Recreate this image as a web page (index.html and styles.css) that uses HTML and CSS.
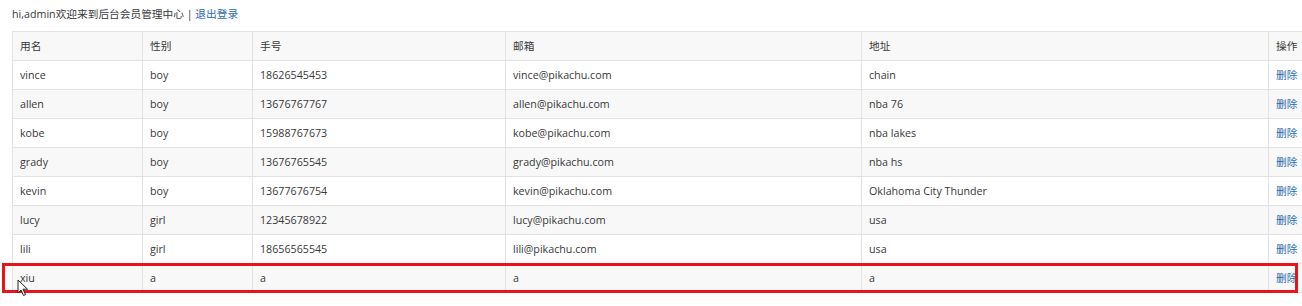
FILE: index.html
```html
<!DOCTYPE html>
<html lang="zh">
<head>
<meta charset="utf-8">
<link rel="stylesheet" href="styles.css">
</head>
<body>
<div class="page">
  <p class="welcome">hi,admin欢迎来到后台会员管理中心 | <a href="#">退出登录</a></p>
  <table class="users">
    <colgroup>
      <col style="width:130px"><col style="width:110px"><col style="width:253px"><col style="width:356px"><col style="width:407px"><col>
    </colgroup>
    <thead>
      <tr><th>用名</th><th>性别</th><th>手号</th><th>邮箱</th><th>地址</th><th>操作</th></tr>
    </thead>
    <tbody>
      <tr><td>vince</td><td>boy</td><td>18626545453</td><td>vince@pikachu.com</td><td>chain</td><td><a href="#">删除</a></td></tr>
      <tr><td>allen</td><td>boy</td><td>13676767767</td><td>allen@pikachu.com</td><td>nba 76</td><td><a href="#">删除</a></td></tr>
      <tr><td>kobe</td><td>boy</td><td>15988767673</td><td>kobe@pikachu.com</td><td>nba lakes</td><td><a href="#">删除</a></td></tr>
      <tr><td>grady</td><td>boy</td><td>13676765545</td><td>grady@pikachu.com</td><td>nba hs</td><td><a href="#">删除</a></td></tr>
      <tr><td>kevin</td><td>boy</td><td>13677676754</td><td>kevin@pikachu.com</td><td>Oklahoma City Thunder</td><td><a href="#">删除</a></td></tr>
      <tr><td>lucy</td><td>girl</td><td>12345678922</td><td>lucy@pikachu.com</td><td>usa</td><td><a href="#">删除</a></td></tr>
      <tr><td>lili</td><td>girl</td><td>18656565545</td><td>lili@pikachu.com</td><td>usa</td><td><a href="#">删除</a></td></tr>
      <tr><td>xiu</td><td>a</td><td>a</td><td>a</td><td>a</td><td><a href="#">删除</a></td></tr>
    </tbody>
  </table>
  <div class="highlight"></div>
  <svg class="cursor" width="12" height="18" viewBox="0 0 12 18">
    <path d="M1 1 L1 14 L4 11 L6.5 16.5 L8.5 15.6 L6 10.2 L10.5 10.2 Z" fill="#fff" stroke="#222" stroke-width="1"/>
  </svg>
</div>
</body>
</html>
```

FILE: styles.css
```css
html, body {
  margin: 0;
  padding: 0;
  background: #fff;
  overflow: hidden;
}
.page {
  position: relative;
  width: 1302px;
  height: 306px;
  padding-left: 12px;
  box-sizing: border-box;
  font-family: "Open Sans", "Noto Sans CJK SC", sans-serif;
  font-size: 10.7px;
  color: #393939;
}
.welcome {
  margin: 0;
  height: 31px;
  line-height: 29px;
  color: #393939;
}
.welcome a, .users a {
  color: #2a6cb0;
  text-decoration: none;
}
.users {
  border-collapse: collapse;
  table-layout: fixed;
  width: 1330px;
}
.users th, .users td {
  border: 1px solid #e2e2e2;
  height: 28px;
  padding: 0 7px;
  line-height: 16px;
  text-align: left;
  font-weight: normal;
  white-space: nowrap;
  overflow: hidden;
  box-sizing: content-box;
}
.users thead tr {
  background: #f8f8f8;
}
.users tbody tr:nth-child(even) {
  background: #f8f8f8;
}
.highlight {
  position: absolute;
  left: 2px;
  top: 263px;
  width: 1296px;
  height: 30px;
  border: 3px solid #e8141c;
  box-sizing: border-box;
}
.cursor {
  position: absolute;
  left: 17px;
  top: 279px;
}
```
